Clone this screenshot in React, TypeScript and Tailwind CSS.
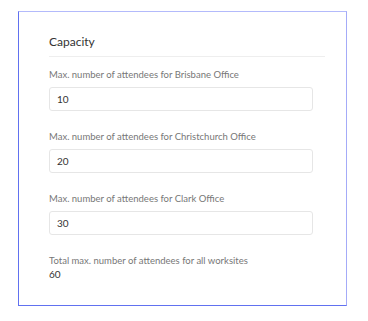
const offices = [
  { name: "Brisbane Office", value: "10" },
  { name: "Christchurch Office", value: "20" },
  { name: "Clark Office", value: "30" },
];

export default function App() {
  return (
    <div className="w-[368px] h-[321px] bg-white pt-[11px] pl-[18px] font-['Lato',sans-serif]">
      <div className="w-[329px] h-[295px] bg-white border border-t-[#b3bafb] border-r-[#a4abf8] border-l-[#6171f0] border-b-[#6171f0] pl-[30px] pr-[21px] pt-[22px]">
        <h2 className="text-[12px] leading-[16px] text-[#333]">Capacity</h2>
        <div className="mt-[6px] border-t border-[#eeeeee]" />
        <div className="pt-[11px]">
          {offices.map((o) => (
            <div key={o.name} className="mb-[19px]">
              <label className="block text-[9.5px] leading-[14px] text-[#777]">
                Max. number of attendees for {o.name}
              </label>
              <div className="mt-[5px] w-[264px] h-[24px] border border-[#e6e6e6] rounded-[3px] pl-[7px] flex items-center text-[10px] text-[#333]">
                {o.value}
              </div>
            </div>
          ))}
          <div className="text-[9.5px] leading-[14px] text-[#777]">
            Total max. number of attendees for all worksites
          </div>
          <div className="text-[10px] leading-[13px] text-[#333]">60</div>
        </div>
      </div>
    </div>
  );
}
